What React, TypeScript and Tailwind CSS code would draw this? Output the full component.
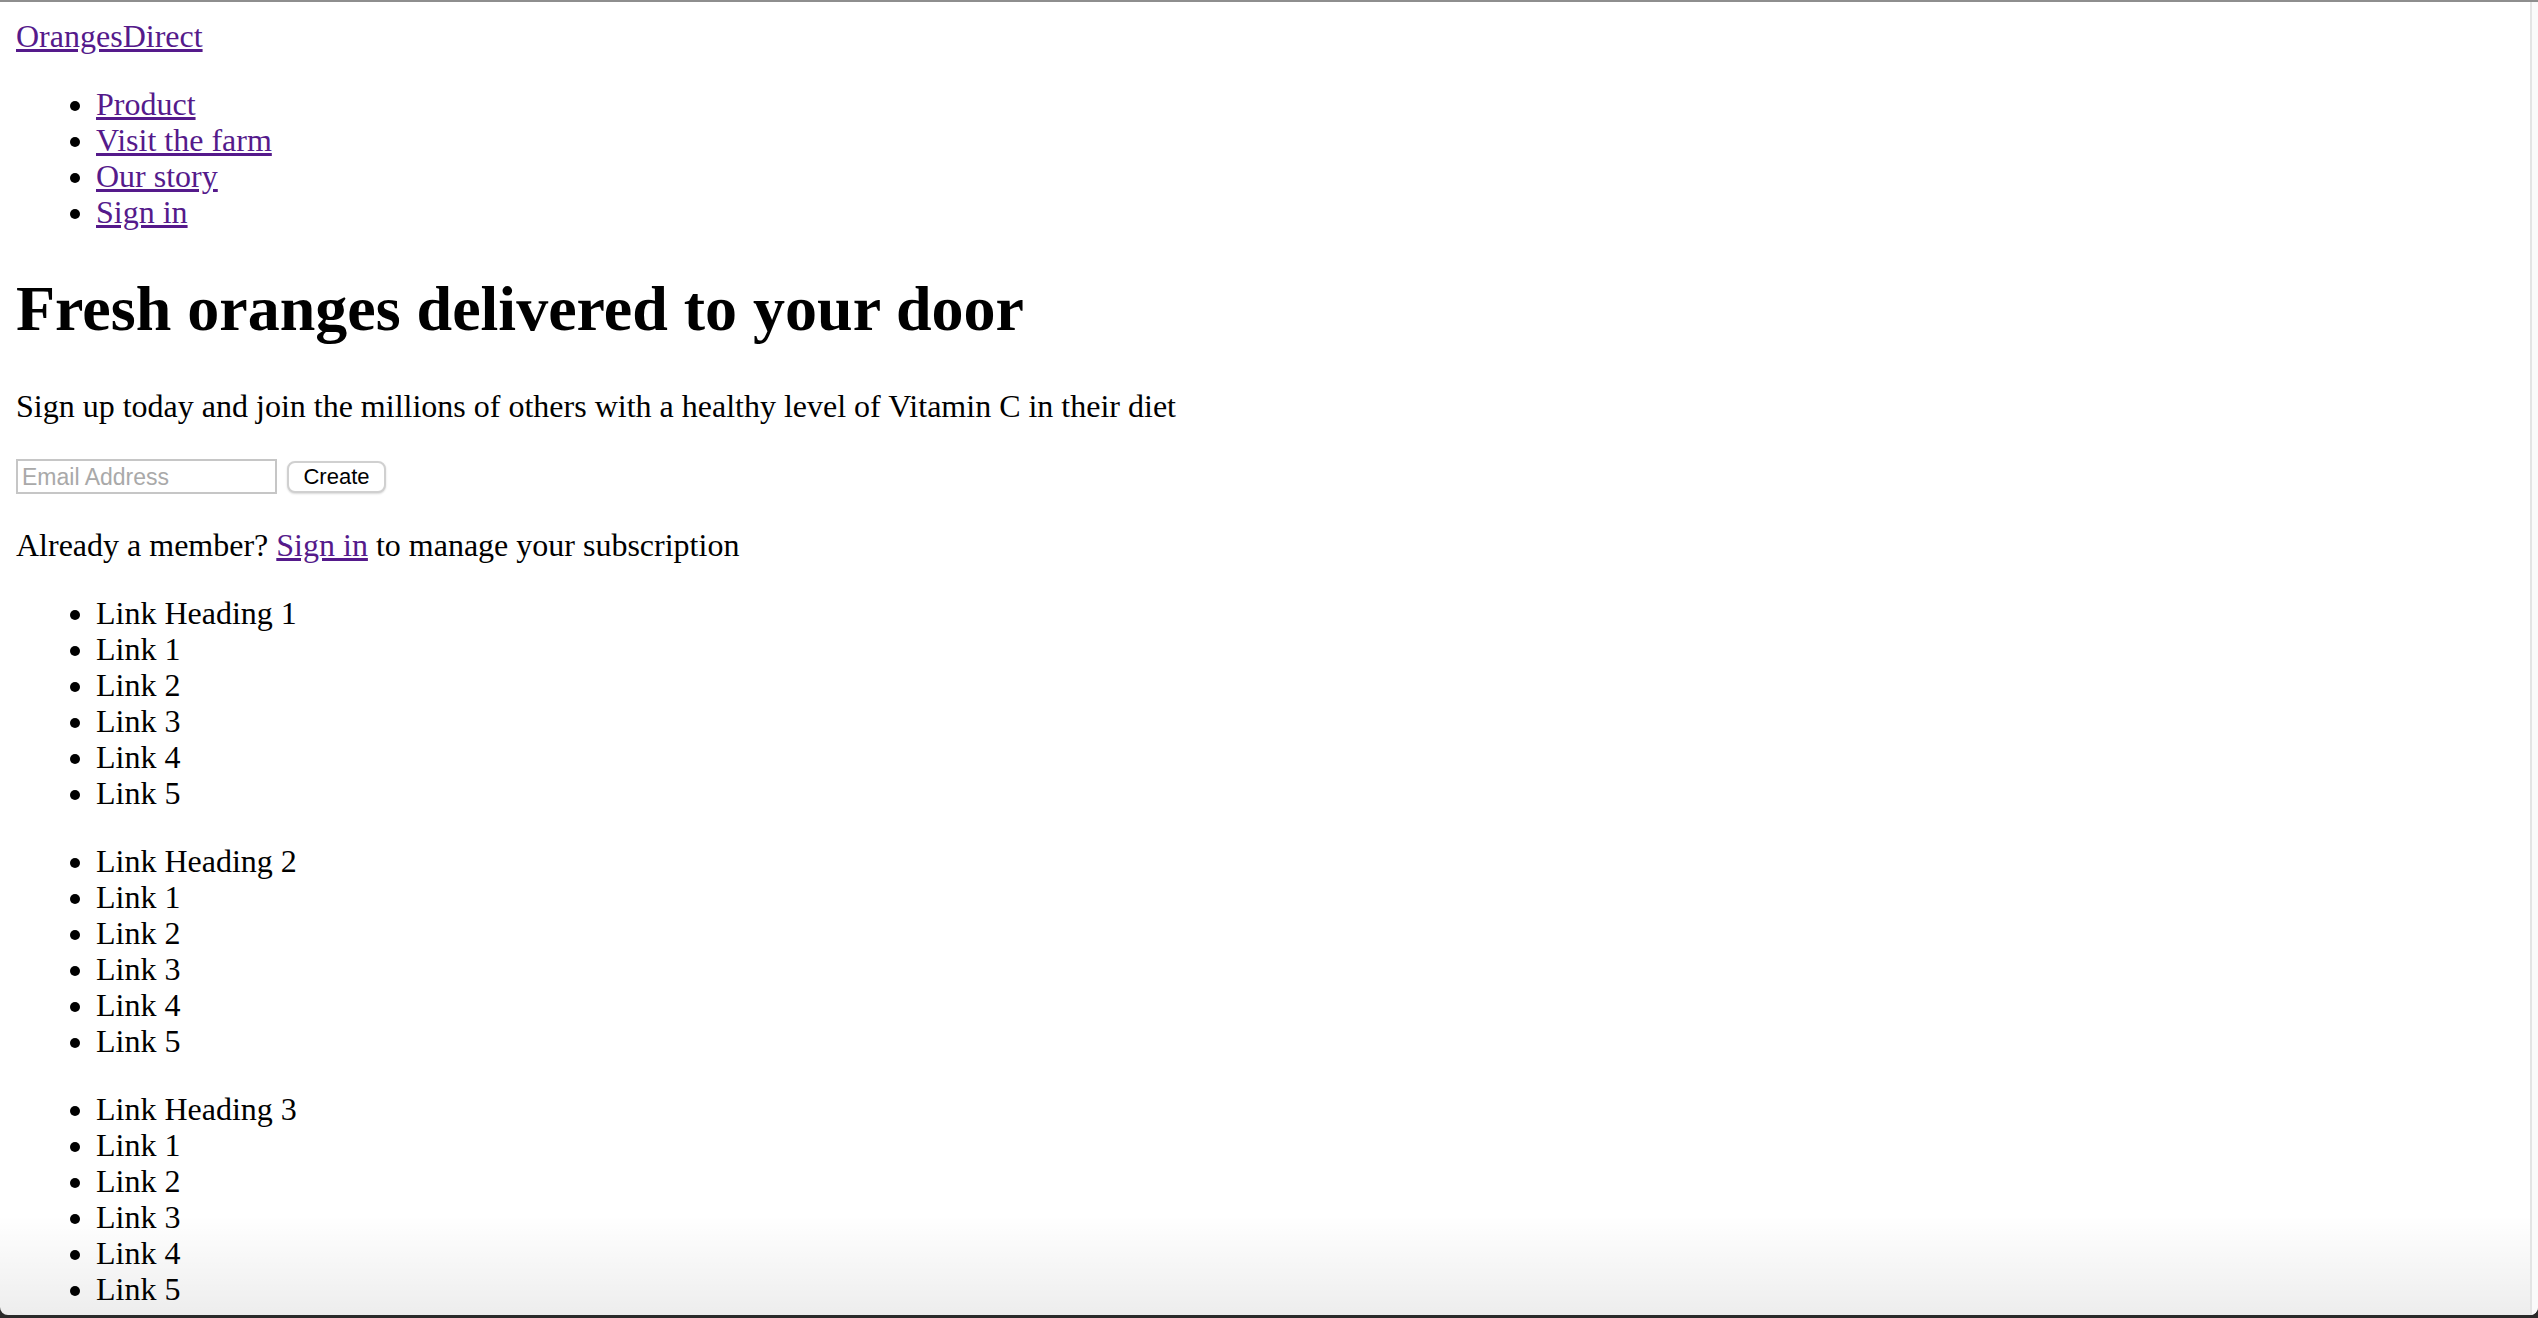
const navLinks = ["Product", "Visit the farm", "Our story", "Sign in"];

const footerGroups = [
  { heading: "Link Heading 1", links: ["Link 1", "Link 2", "Link 3", "Link 4", "Link 5"] },
  { heading: "Link Heading 2", links: ["Link 1", "Link 2", "Link 3", "Link 4", "Link 5"] },
  { heading: "Link Heading 3", links: ["Link 1", "Link 2", "Link 3", "Link 4", "Link 5"] },
];

export default function App() {
  return (
    <div className="h-[1318px] w-full flex flex-col bg-[#2a2a2a] overflow-hidden">
      <div className="flex-1 min-h-0 flex bg-white border-t-2 border-[#8e8e8e] rounded-bl-[8px] rounded-br-[8px] overflow-hidden">
        {/* page */}
        <div className="relative flex-1 min-w-0 overflow-hidden px-4 pt-4 font-['Liberation_Serif','Times_New_Roman',serif] text-[32px] leading-[36px] text-black">
          <header>
            <a href="#" className="text-[#551a8b] underline">
              OrangesDirect
            </a>
            <nav>
              <ul className="list-disc pl-[80px] mt-8">
                {navLinks.map((l) => (
                  <li key={l}>
                    <a href="#" className="text-[#551a8b] underline">
                      {l}
                    </a>
                  </li>
                ))}
              </ul>
            </nav>
          </header>

          <main>
            <h1 className="mt-[43px] text-[64px] leading-[72px] font-bold">Fresh oranges delivered to your door</h1>
            <p className="mt-[43px]">Sign up today and join the millions of others with a healthy level of Vitamin C in their diet</p>

            <form className="mt-[35px] flex items-center gap-[10px] font-['Liberation_Sans',Arial,sans-serif]">
              <input
                type="email"
                placeholder="Email Address"
                className="h-[35px] w-[261px] border-2 border-[#c6c6c6] px-[4px] text-[23px] placeholder:text-[#a9a9a9] text-black outline-none"
              />
              <button
                type="button"
                className="h-[32px] w-[99px] rounded-[8px] border-2 border-[#d0d0d0] bg-white text-[22px] text-black leading-none shadow-[0_1px_2px_rgba(0,0,0,0.15)]"
              >
                Create
              </button>
            </form>

            <p className="mt-[33px]">
              Already a member?{" "}
              <a href="#" className="text-[#551a8b] underline">
                Sign in
              </a>{" "}
              to manage your subscription
            </p>
          </main>

          <footer>
            {footerGroups.map((g) => (
              <ul key={g.heading} className="list-disc pl-[80px] mt-8">
                <li>{g.heading}</li>
                {g.links.map((l, i) => (
                  <li key={i}>{l}</li>
                ))}
              </ul>
            ))}
          </footer>

          {/* window shadow at the bottom edge */}
          <div className="pointer-events-none absolute inset-x-0 bottom-0 h-[100px] bg-gradient-to-b from-transparent to-[rgba(0,0,0,0.07)]" />
        </div>

        {/* scrollbar track */}
        <div className="w-[8px] shrink-0 border-l-2 border-[#e4e4e4] bg-[#fafafa]" />
      </div>
      <div className="h-[3px] shrink-0" />
    </div>
  );
}
